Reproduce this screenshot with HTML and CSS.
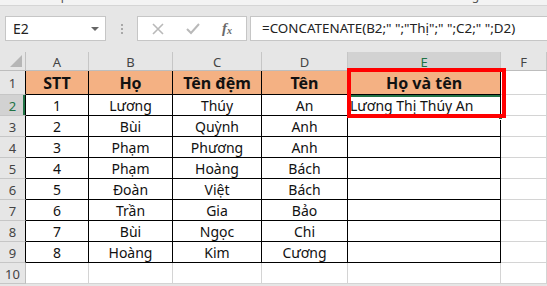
FILE: index.html
```html
<!DOCTYPE html>
<html lang="vi">
<head>
    <meta charset="UTF-8">
    <meta name="viewport" content="width=device-width, initial-scale=1.0">
    <title>CONCATENATE - Họ và tên</title>
    <link rel="stylesheet" href="styles.css">
</head>
<body>
    <!-- RIBBON GROUP LABELS (cut off at the top) -->
    <div class="ribbon">
        <span class="group-label lbl-clipboard">Clipboard</span>
        <span class="launcher lch-1">↘</span>
        <span class="group-label lbl-font">Font</span>
        <span class="launcher lch-2">↘</span>
        <span class="group-label lbl-align">Alignment</span>
    </div>

    <!-- FORMULA BAR -->
    <div class="formula-row">
        <div class="name-box">
            <span>E2</span>
            <span class="name-arrow"></span>
        </div>
        <div class="grip"><i></i><i></i><i></i></div>
        <div class="fx-buttons">
            <svg class="fx-icon" width="14" height="14" viewBox="0 0 14 14">
                <path d="M2 2 L12 12 M12 2 L2 12" stroke="#b9b9b9" stroke-width="1.6" fill="none"/>
            </svg>
            <svg class="fx-icon" width="16" height="14" viewBox="0 0 16 14">
                <path d="M2 7 L6 11 L14 2" stroke="#b9b9b9" stroke-width="2" fill="none"/>
            </svg>
            <span class="fx-label">f<sub>x</sub></span>
        </div>
        <div class="formula-box">=CONCATENATE(B2;" ";"Thị";" ";C2;" ";D2)</div>
    </div>

    <!-- SHEET -->
    <div class="sheet">
        <div class="grid">
            <!-- column headers -->
            <div class="cell corner"><span class="corner-tri"></span></div>
            <div class="cell col-head">A</div>
            <div class="cell col-head">B</div>
            <div class="cell col-head">C</div>
            <div class="cell col-head">D</div>
            <div class="cell col-head col-sel">E</div>
            <div class="cell col-head col-last">F</div>

            <!-- row 1 -->
            <div class="cell row-head in-table">1</div>
            <div class="cell data hdr">STT</div>
            <div class="cell data hdr">Họ</div>
            <div class="cell data hdr">Tên đệm</div>
            <div class="cell data hdr">Tên</div>
            <div class="cell data hdr">Họ và tên</div>
            <div class="cell"></div>

            <!-- row 2 -->
            <div class="cell row-head in-table row-sel">2</div>
            <div class="cell data">1</div>
            <div class="cell data">Lương</div>
            <div class="cell data">Thúy</div>
            <div class="cell data">An</div>
            <div class="cell data active">Lương Thị Thúy An</div>
            <div class="cell"></div>

            <!-- row 3 -->
            <div class="cell row-head in-table">3</div>
            <div class="cell data">2</div>
            <div class="cell data">Bùi</div>
            <div class="cell data">Quỳnh</div>
            <div class="cell data">Anh</div>
            <div class="cell data"></div>
            <div class="cell"></div>

            <!-- row 4 -->
            <div class="cell row-head in-table">4</div>
            <div class="cell data">3</div>
            <div class="cell data">Phạm</div>
            <div class="cell data">Phương</div>
            <div class="cell data">Anh</div>
            <div class="cell data"></div>
            <div class="cell"></div>

            <!-- row 5 -->
            <div class="cell row-head in-table">5</div>
            <div class="cell data">4</div>
            <div class="cell data">Phạm</div>
            <div class="cell data">Hoàng</div>
            <div class="cell data">Bách</div>
            <div class="cell data"></div>
            <div class="cell"></div>

            <!-- row 6 -->
            <div class="cell row-head in-table">6</div>
            <div class="cell data">5</div>
            <div class="cell data">Đoàn</div>
            <div class="cell data">Việt</div>
            <div class="cell data">Bách</div>
            <div class="cell data"></div>
            <div class="cell"></div>

            <!-- row 7 -->
            <div class="cell row-head in-table">7</div>
            <div class="cell data">6</div>
            <div class="cell data">Trần</div>
            <div class="cell data">Gia</div>
            <div class="cell data">Bảo</div>
            <div class="cell data"></div>
            <div class="cell"></div>

            <!-- row 8 -->
            <div class="cell row-head in-table">8</div>
            <div class="cell data">7</div>
            <div class="cell data">Bùi</div>
            <div class="cell data">Ngọc</div>
            <div class="cell data">Chi</div>
            <div class="cell data"></div>
            <div class="cell"></div>

            <!-- row 9 -->
            <div class="cell row-head in-table">9</div>
            <div class="cell data">8</div>
            <div class="cell data">Hoàng</div>
            <div class="cell data">Kim</div>
            <div class="cell data">Cương</div>
            <div class="cell data"></div>
            <div class="cell"></div>

            <!-- row 10 -->
            <div class="cell row-head">10</div>
            <div class="cell"></div>
            <div class="cell"></div>
            <div class="cell"></div>
            <div class="cell"></div>
            <div class="cell"></div>
            <div class="cell"></div>
        </div>

        <!-- fill handle + highlight box over E1:E2 -->
        <span class="fill-handle"></span>
        <div class="highlight"></div>
    </div>
</body>
</html>
```

FILE: styles.css
```css
* {
    box-sizing: border-box;
}

body {
    margin: 0;
    background: #e6e6e6;
    font-family: "Noto Sans", "Open Sans", sans-serif;
    overflow: hidden;
}

/* Ribbon strip */
.ribbon {
    position: relative;
    height: 6px;
    background: #f3f3f3;
    border-bottom: 1px solid #d5d5d5;
    overflow: hidden;
}

.group-label,
.launcher {
    position: absolute;
    top: -11px;
    font-size: 12px;
    line-height: 14px;
    color: #555;
}

.lbl-clipboard { left: 47px; }
.lbl-font { left: 240px; }
.lbl-align { left: 458px; }
.lch-1 { left: 148px; }
.lch-2 { left: 353px; }

/* Formula bar */
.formula-row {
    display: flex;
    align-items: stretch;
    height: 25px;
    margin: 10px 0 11px 0;
    padding-left: 5px;
}

.name-box {
    display: flex;
    align-items: center;
    justify-content: space-between;
    width: 101px;
    background: white;
    border: 1px solid #c6c6c6;
    padding: 0 6px 0 7px;
    font-size: 14px;
    color: #222;
}

.name-arrow {
    width: 0;
    height: 0;
    border-left: 4px solid transparent;
    border-right: 4px solid transparent;
    border-top: 4px solid #666;
}

.grip {
    display: flex;
    flex-direction: column;
    justify-content: center;
    gap: 2px;
    width: 31px;
    align-items: center;
}

.grip i {
    display: block;
    width: 2px;
    height: 2px;
    background: #a8a8a8;
}

.fx-buttons {
    display: flex;
    align-items: center;
    width: 110px;
    background: white;
    border: 1px solid #c6c6c6;
    padding-left: 13px;
    gap: 20px;
}

.fx-label {
    font-family: "Liberation Serif", serif;
    font-style: italic;
    font-weight: bold;
    font-size: 15px;
    color: #6a6a6a;
    margin-left: 1px;
}

.fx-label sub {
    font-size: 10px;
    vertical-align: -1px;
}

.formula-box {
    flex: 1;
    margin-left: 3px;
    background: white;
    border: 1px solid #c6c6c6;
    border-right: none;
    padding-left: 11px;
    font-size: 13.4px;
    line-height: 23px;
    color: #222;
    white-space: nowrap;
}

/* Sheet grid */
.sheet {
    position: relative;
    background: white;
}

.grid {
    display: grid;
    grid-template-columns: 26px 63px 84px 89px 86px 153px 1fr;
    grid-template-rows: 19px 24px repeat(9, 21px);
}

.cell {
    display: flex;
    align-items: center;
    justify-content: center;
    border-right: 1px solid #d4d4d4;
    border-bottom: 1px solid #d4d4d4;
    font-size: 14px;
    color: #111;
    white-space: nowrap;
    overflow: hidden;
}

.corner {
    position: relative;
    background: #e6e6e6;
    border-right-color: #c0c0c0;
    border-bottom-color: #bdbdbd;
}

.corner-tri {
    position: absolute;
    right: 3px;
    bottom: 3px;
    width: 0;
    height: 0;
    border-left: 12px solid transparent;
    border-bottom: 12px solid #b6b6b6;
}

.col-head {
    background: #e6e6e6;
    color: #444;
    font-size: 13px;
    border-right-color: #c6c6c6;
    border-bottom-color: #bdbdbd;
    padding-top: 1px;
}

.col-sel {
    background: #d2d2d2;
    color: #217346;
}

.row-head {
    background: #e6e6e6;
    color: #444;
    font-size: 13px;
    border-right-color: #bdbdbd;
    border-bottom-color: #c6c6c6;
    padding-top: 1px;
}

.row-head.in-table {
    border-right-color: #000;
}

.row-sel {
    background: #d2d2d2;
    color: #217346;
    box-shadow: inset -2px 0 0 #217346;
}

.data {
    border-right-color: #000;
    border-bottom-color: #000;
}

.hdr {
    background: #f4b183;
    font-weight: bold;
    font-size: 16px;
}

.active {
    justify-content: flex-start;
    padding-left: 2px;
    box-shadow: inset 0 2px 0 #217346;
}

.fill-handle {
    position: absolute;
    left: 498px;
    top: 63px;
    width: 5px;
    height: 5px;
    background: #217346;
    border: 1px solid white;
}

.highlight {
    position: absolute;
    left: 347px;
    top: 16px;
    width: 159px;
    height: 50px;
    border: 4px solid #ff0000;
}
```
